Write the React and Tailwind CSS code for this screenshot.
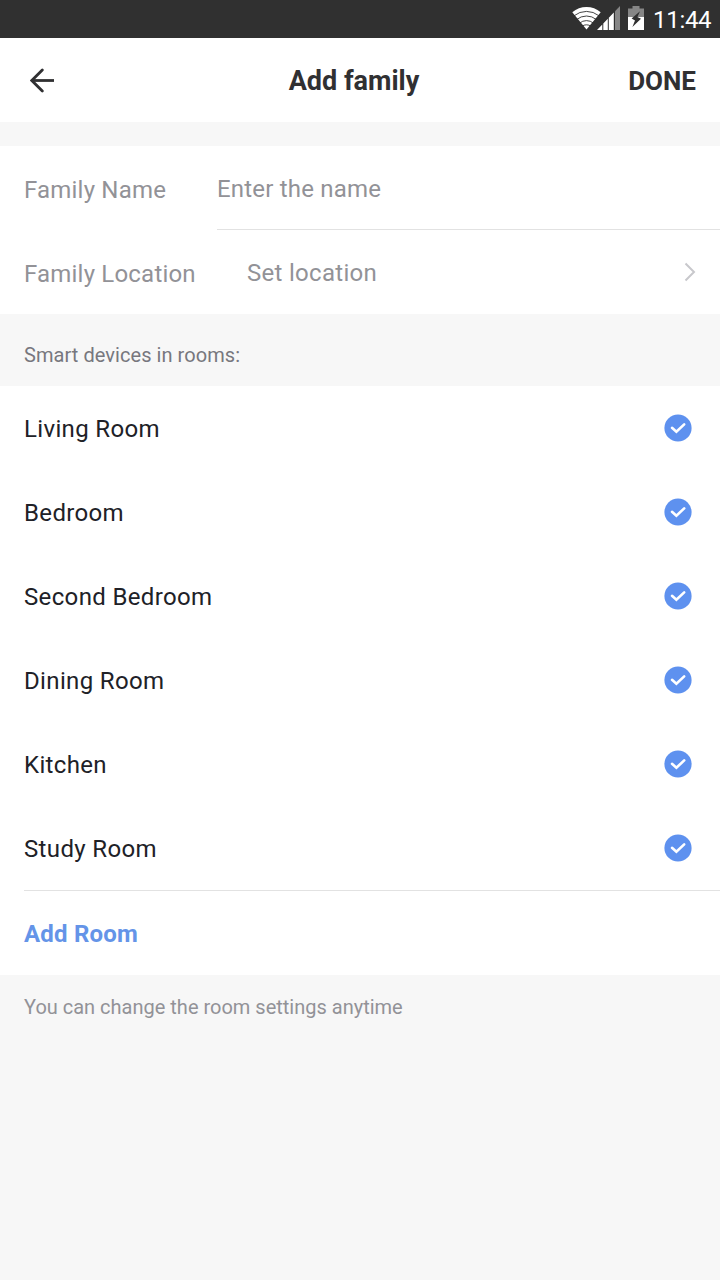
import React from "react";

const rooms = ["Living Room", "Bedroom", "Second Bedroom", "Dining Room", "Kitchen", "Study Room"];

/**
 * Wifi fan with thin gaps between the bands
 */
function WifiIcon() {
  return (
    <svg className="block" width="29" height="24" viewBox="0 0 29 24">
      <path d="M14.5 23.5 L0.3 6.3 Q6.5 1 14.5 1 T28.7 6.3 Z" fill="#fff" />
      <g fill="none" stroke="#303030" strokeWidth="0.9">
        <path d="M2 9.8 Q7.5 5.4 14.5 5.4 T27 9.8" />
        <path d="M4.5 13.6 Q9 10 14.5 10 T24.5 13.6" />
        <path d="M7.5 17.2 Q10.5 14.6 14.5 14.6 T21.5 17.2" />
        <path d="M10 20.2 Q12 18.8 14.5 18.8 T19 20.2" />
      </g>
    </svg>
  );
}

function SignalIcon() {
  return (
    <svg className="block" width="23" height="24" viewBox="0 0 23 24">
      <path d="M0 24 L5.3 18.4 V24 Z M6.3 17.4 L10.8 12.7 V24 H6.3 Z M11.8 11.7 L16.8 6.5 V24 H11.8 Z" fill="#fff" />
      <path d="M18 5.2 L23 0 V24 H18 Z" fill="#868686" />
    </svg>
  );
}

function BatteryIcon() {
  return (
    <svg className="block" width="16" height="24" viewBox="0 0 16 24">
      <path d="M4.5 0 H11.5 V2.5 H16 V12 H0 V2.5 H4.5 Z" fill="#868686" />
      <path d="M0 11 H16 V24 H0 Z" fill="#fff" />
      <path d="M12 5.2 L3.6 12.6 L7 14.4 L4.4 21 L13 12.8 L9.4 11 Z" fill="#303030" />
    </svg>
  );
}

function CheckCircle() {
  return (
    <svg className="block" width="28" height="28" viewBox="0 0 28 28">
      <circle cx="14" cy="14" r="13.6" fill="#5e91ef" />
      <path d="M8 13.8 L12.4 17.8 L20.2 10.4" fill="none" stroke="#fff" strokeWidth="2.6" strokeLinecap="round" />
    </svg>
  );
}

/**
 * One selectable room line
 */
function RoomRow({ name }) {
  return (
    <li className="flex h-21 items-center justify-between pl-6 pr-7 text-2xl tracking-[0.35px] text-[#202127]">
      <span className="mt-0.5">{name}</span>
      <CheckCircle />
    </li>
  );
}

export default function App() {
  return (
    <div className="flex h-[1280px] w-[720px] flex-col overflow-hidden bg-[#f7f7f7] font-['Roboto',sans-serif]">
      <div className="flex h-[38px] shrink-0 items-center justify-end bg-[#303030] pr-[9px] text-white">
        <div className="flex pb-0.5">
          <WifiIcon />
          <div className="-ml-1">
            <SignalIcon />
          </div>
          <div className="ml-2">
            <BatteryIcon />
          </div>
        </div>
        <span className="ml-[9px] w-[58px] whitespace-nowrap pt-0.5 text-2xl leading-none tracking-[-0.3px]">11:44</span>
      </div>

      <header className="grid h-21 shrink-0 grid-cols-3 items-center bg-white px-6 font-bold text-[#303032]">
        <svg className="ml-1.5 mt-px" width="26" height="26" viewBox="0 0 26 26" fill="none" stroke="#303032" strokeWidth="2.8" strokeLinecap="round">
          <path d="M12.3 2 L1.8 12.5 L12.3 23" />
          <path d="M2 12.5 H24" strokeLinecap="butt" />
        </svg>
        <h1 className="-ml-3 pt-[3px] text-center text-[27px]">Add family</h1>
        <span className="pt-0.5 text-right text-[26px]">DONE</span>
      </header>

      <section className="mt-6 shrink-0 bg-white text-2xl tracking-[0.2px] text-[#929297]">
        <div className="flex h-21">
          <span className="flex w-[217px] items-center pl-6 pt-1">Family Name</span>
          <span className="flex flex-1 items-center border-b border-[#e2e2e2] pt-0.5">Enter the name</span>
        </div>
        <div className="flex h-21 items-center pr-6">
          <span className="w-[247px] pl-6 pt-1">Family Location</span>
          <span className="flex-1 pt-0.5 tracking-[0.3px]">Set location</span>
          <svg width="12" height="20" viewBox="0 0 12 20" fill="none" stroke="#c8c8cc" strokeWidth="2">
            <path d="M1.5 1.5 L10 10 L1.5 18.5" />
          </svg>
        </div>
      </section>

      <h2 className="flex h-18 shrink-0 items-center pl-6 pt-2.5 text-xl tracking-[0.06px] text-[#77777e]">Smart devices in rooms:</h2>

      <section className="shrink-0 bg-white">
        <ul>
          {rooms.map((name) => (
            <RoomRow key={name} name={name} />
          ))}
        </ul>
        <div className="ml-6 flex h-[85px] items-center border-t border-[#e2e2e2] pt-0.5 text-2xl font-bold tracking-[0.2px] text-[#6494e8]">
          Add Room
        </div>
      </section>

      <p className="pl-6 pt-[18px] text-xl text-[#929297]">You can change the room settings anytime</p>
    </div>
  );
}
